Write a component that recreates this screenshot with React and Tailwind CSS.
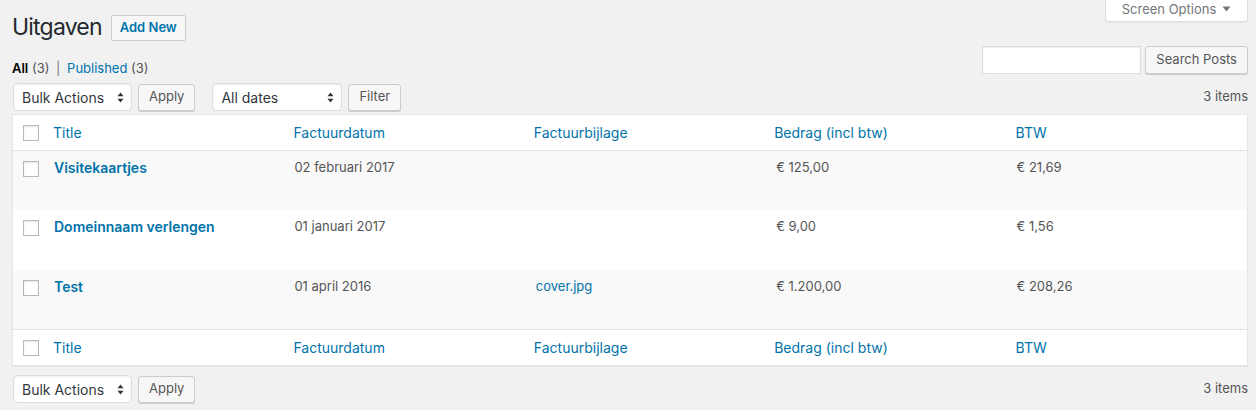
import React from "react";

const font = { fontFamily: "Inter, 'Liberation Sans', sans-serif" };

function Select({ label, width }) {
  return (
    <div
      className={`${width} h-[28px] bg-white border border-[#ddd] rounded-[4px] shadow-[inset_0_1px_2px_rgba(0,0,0,0.07)] flex items-center justify-between pl-[8px] pr-[7px] text-[14px] text-[#32373c]`}
    >
      <span>{label}</span>
      <svg width="7" height="11" viewBox="0 0 7 11">
        <path d="M3.5 0.5 L6.5 4.3 L0.5 4.3 Z" fill="#333" />
        <path d="M3.5 10.5 L6.5 6.7 L0.5 6.7 Z" fill="#333" />
      </svg>
    </div>
  );
}

function Button({ children, className = "" }) {
  return (
    <div
      className={`h-[27px] px-[10px] flex items-center bg-[#f7f7f7] border border-[#ccc] rounded-[3px] shadow-[0_1px_0_#ccc] text-[13px] text-[#555] ${className}`}
    >
      {children}
    </div>
  );
}

function Checkbox() {
  return <div className="w-[16px] h-[16px] bg-white border border-[#b4b9be] shadow-[inset_0_1px_2px_rgba(0,0,0,0.1)]" />;
}

const cols = "grid grid-cols-[32px_1fr_1fr_1fr_1fr_1fr]";

function HeadRow({ top }) {
  return (
    <div
      className={`${cols} h-[36px] items-center text-[14px] text-[#0073aa] ${
        top ? "border-b border-[#e1e1e1]" : "border-t border-[#e1e1e1]"
      }`}
    >
      <div className="pl-[10px]">
        <Checkbox />
      </div>
      <div className="pl-[8px]">Title</div>
      <div className="pl-[8px]">Factuurdatum</div>
      <div className="pl-[8px]">Factuurbijlage</div>
      <div className="pl-[8px]">Bedrag (incl btw)</div>
      <div className="pl-[9px]">BTW</div>
    </div>
  );
}

const rows = [
  { t: "Visitekaartjes", d: "02 februari 2017", f: "", b: "€ 125,00", w: "€ 21,69", alt: true, h: "h-[59px]" },
  { t: "Domeinnaam verlengen", d: "01 januari 2017", f: "", b: "€ 9,00", w: "€ 1,56", alt: false, h: "h-[60px]" },
  { t: "Test", d: "01 april 2016", f: "cover.jpg", b: "€ 1.200,00", w: "€ 208,26", alt: true, h: "h-[59px]" },
];

export default function App() {
  return (
    <div style={font} className="w-[1256px] h-[410px] bg-[#f1f1f1] pl-[12px] pr-[8px] text-[13px] text-[#444] overflow-hidden">
      <div className="flex justify-between items-start">
        <div className="flex items-center pt-[13px] h-[42px]">
          <h1 className="text-[23px] leading-[29px] tracking-[-0.8px] text-[#23282d] font-normal">Uitgaven</h1>
          <div className="ml-[9px] h-[26px] px-[8px] flex items-center bg-[#f7f7f7] border border-[#ccc] rounded-[2px] text-[13px] font-semibold text-[#0073aa]">
            Add New
          </div>
        </div>
        <div className="h-[22px] w-[143px] bg-white border border-t-0 border-[#ddd] rounded-b-[3px] shadow-[0_1px_1px_rgba(0,0,0,0.04)] flex items-start pt-[1px] justify-center gap-[6px] text-[13px] text-[#72777c]">
          <span className="leading-[16px]">Screen Options</span>
          <svg width="9" height="6" viewBox="0 0 9 6" className="mt-[5px]">
            <path d="M0.5 0.5 L8.5 0.5 L4.5 5.5 Z" fill="#72777c" />
          </svg>
        </div>
      </div>

      <div className="flex justify-between items-end mt-[4px]">
        <div className="text-[13px] leading-[18px] pb-[0px] mb-[-3px] text-[#555]">
          <span className="font-semibold text-black">All</span> (3) <span className="text-[#777] mx-[3px]">|</span>{" "}
          <span className="text-[#0073aa]">Published</span> (3)
        </div>
        <div className="flex items-center gap-[4px]">
          <div className="w-[159px] h-[28px] bg-white border border-[#ddd] shadow-[inset_0_1px_2px_rgba(0,0,0,0.07)]" />
          <Button className="h-[28px]">Search Posts</Button>
        </div>
      </div>

      <div className="flex justify-between items-center mt-[10px] h-[26px]">
        <div className="flex items-center">
          <Select label="Bulk Actions" width="w-[119px] ml-[1px]" />
          <Button className="ml-[6px]">Apply</Button>
          <Select label="All dates" width="w-[130px] ml-[17px]" />
          <Button className="ml-[6px]">Filter</Button>
        </div>
        <div className="text-[13px] text-[#555]">3 items</div>
      </div>

      <div className="mt-[4px] bg-white border border-[#e5e5e5] shadow-[0_1px_1px_rgba(0,0,0,0.04)]">
        <HeadRow top />
        {rows.map((r) => (
          <div key={r.t} className={`${cols} ${r.h} pt-[8px] ${r.alt ? "bg-[#f9f9f9]" : "bg-white"}`}>
            <div className="pl-[10px] pt-[2px]">
              <Checkbox />
            </div>
            <div className="pl-[9px] text-[14px] font-semibold text-[#0073aa] leading-[17px]">{r.t}</div>
            <div className="pl-[9px] text-[13px] text-[#555] leading-[17px]">{r.d}</div>
            <div className="pl-[10px] text-[13px] text-[#0073aa] leading-[17px]">{r.f}</div>
            <div className="pl-[10px] text-[13px] text-[#555] leading-[17px]">{r.b}</div>
            <div className="pl-[10px] text-[13px] text-[#555] leading-[17px]">{r.w}</div>
          </div>
        ))}
        <HeadRow />
      </div>

      <div className="flex justify-between items-center mt-[10px] h-[26px]">
        <div className="flex items-center">
          <Select label="Bulk Actions" width="w-[119px] ml-[1px]" />
          <Button className="ml-[6px]">Apply</Button>
        </div>
        <div className="text-[13px] text-[#555]">3 items</div>
      </div>
    </div>
  );
}
